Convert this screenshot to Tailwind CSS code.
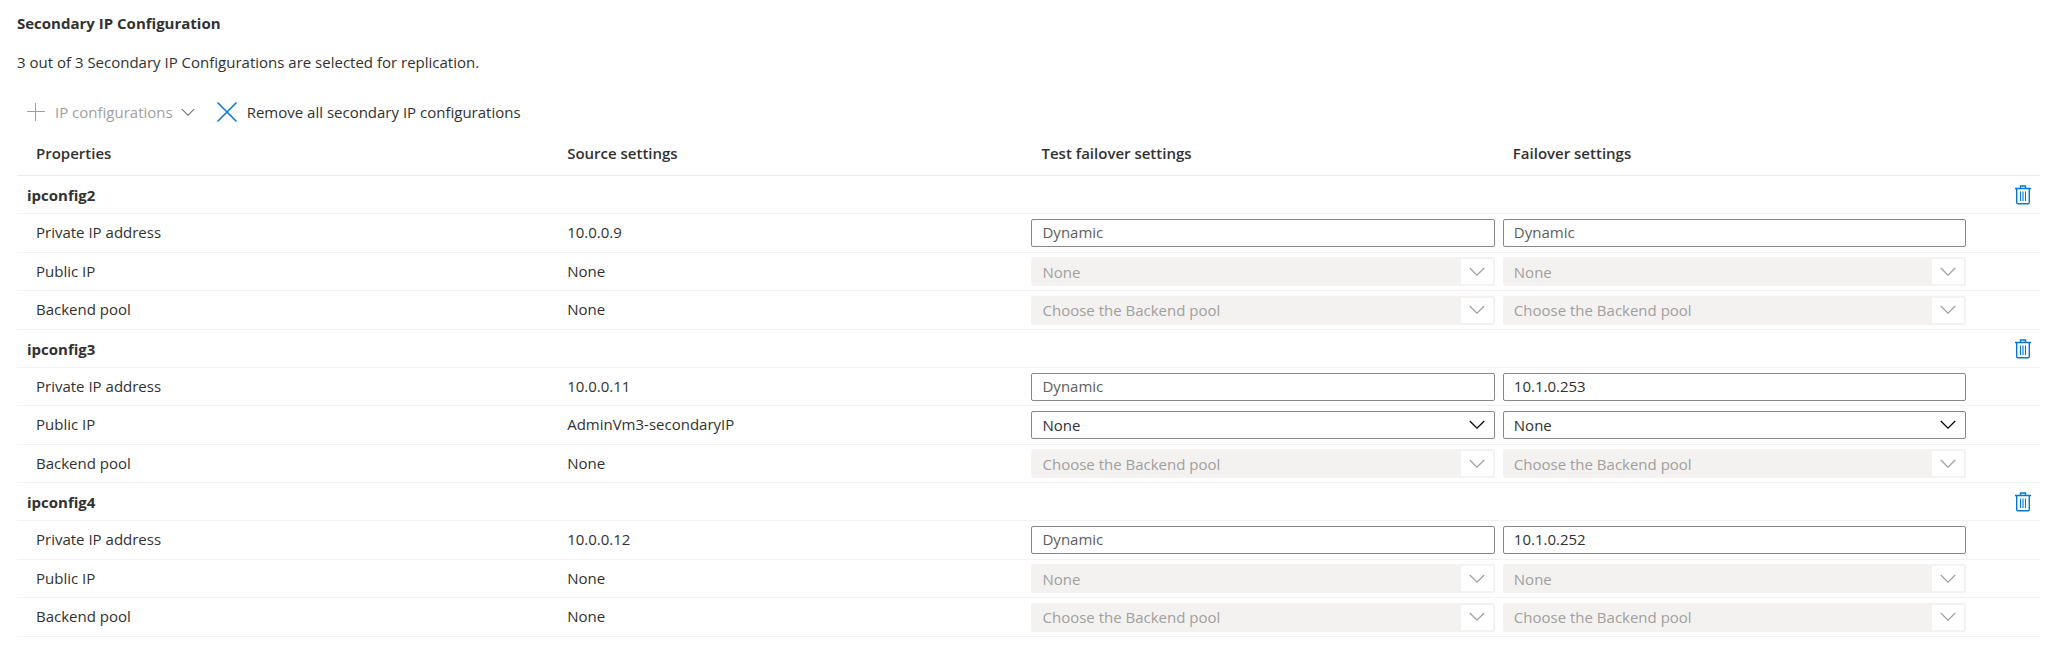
<!DOCTYPE html>
<html lang="en">
<head>
<meta charset="utf-8">
<meta name="viewport" content="width=device-width, initial-scale=1">
<title>Secondary IP Configuration</title>
<script src="https://cdn.jsdelivr.net/npm/@tailwindcss/browser@4"></script>
</head>
<body class="bg-white text-[#323130] text-[15px] leading-5 font-['Open_Sans','Noto_Sans',sans-serif]">
<svg class="hidden" aria-hidden="true">
  <symbol id="chevron" viewBox="0 0 16 10"><path d="M0.8 1 8 8.2 15.2 1" fill="none" stroke="currentColor" stroke-width="1.2"/></symbol>
  <symbol id="trash" viewBox="0 0 16 20"><path d="M0 3.5H16M5.5 3.5V1H10.5V3.5M1.7 3.5V17.5Q1.7 18.8 3 18.8H13Q14.3 18.8 14.3 17.5V3.5" fill="none" stroke="currentColor" stroke-width="1.4"/><path d="M5.5 6.5V16M8 6.5V16M10.5 6.5V16" fill="none" stroke="currentColor" stroke-width="1.1"/></symbol>
</svg>
<main class="pl-[17px] pr-[18px] pt-[13px]">
  <h1 class="font-bold">Secondary IP Configuration</h1>
  <p class="mt-[19px]">3 out of 3 Secondary IP Configurations are selected for replication.</p>

  <div class="mt-[22px] flex h-9 items-center gap-[22px] pl-[10px]">
    <button type="button" disabled class="flex items-center gap-2 text-[#a19f9d]">
      <svg class="mr-[2px] size-[18px]" viewBox="0 0 18 18" aria-hidden="true"><path d="M8.5 0V18M0 8.5H18" fill="none" stroke="currentColor"/></svg>
      IP configurations
      <svg class="h-[9px] w-[14px] text-[#605e5c]" aria-hidden="true"><use href="#chevron"/></svg>
    </button>
    <button type="button" class="flex items-center gap-[10px]">
      <svg class="size-5 text-[#0078d4]" viewBox="0 0 20 20" aria-hidden="true"><path d="M0.5 0.5 19.5 19.5M19.5 0.5 0.5 19.5" fill="none" stroke="currentColor" stroke-width="1.5"/></svg>
      Remove all secondary IP configurations
    </button>
  </div>

  <table class="w-full table-fixed border-separate border-spacing-0 text-left
    [&_tbody_td]:border-b [&_tbody_td]:border-[#f3f2f1] [&_tbody_th]:border-b [&_tbody_th]:border-[#f3f2f1] [&_thead_th]:border-b [&_thead_th]:border-[#edebe9] [&_thead_td]:border-b [&_thead_td]:border-[#edebe9]">
    <colgroup><col class="w-[26.7%]"><col class="w-[23.25%]"><col class="w-[23.3%]"><col class="w-[23.3%]"><col></colgroup>
    <thead>
      <tr class="h-[46px] [&>th]:font-semibold">
        <th scope="col" class="pl-[19px]">Properties</th>
        <th scope="col" class="pl-[10px]">Source settings</th>
        <th scope="col" class="pl-[14px]">Test failover settings</th>
        <th scope="col" class="pl-[14px]">Failover settings</th>
        <td></td>
      </tr>
    </thead>

    <tbody>
      <tr class="h-[38px]">
        <th scope="rowgroup" colspan="4" class="pl-[10px] font-bold">ipconfig2</th>
        <td><button type="button" aria-label="Delete ipconfig2" class="ml-auto mr-[9px] block text-[#0078d4]"><svg class="h-5 w-4"><use href="#trash"/></svg></button></td>
      </tr>
      <tr class="h-[39px]">
        <th scope="row" class="pb-[2px] pl-[19px] font-normal">Private IP address</th>
        <td class="pb-[2px] pl-[10px]">10.0.0.9</td>
        <td class="px-1"><input aria-label="ipconfig2 test failover private IP address" placeholder="Dynamic" class="block h-7 w-full rounded-xs border border-[#8a8886] px-[10px] pb-[2px] placeholder:text-[#605e5c]"></td>
        <td class="px-1"><input aria-label="ipconfig2 failover private IP address" placeholder="Dynamic" class="block h-7 w-full rounded-xs border border-[#8a8886] px-[10px] pb-[2px] placeholder:text-[#605e5c]"></td>
        <td></td>
      </tr>
      <tr class="h-[38px]">
        <th scope="row" class="pb-[2px] pl-[19px] font-normal">Public IP</th>
        <td class="pb-[2px] pl-[10px]">None</td>
        <td class="px-1"><div class="relative"><select disabled aria-label="ipconfig2 test failover public IP" class="block h-[29px] w-full appearance-none rounded-xs bg-[#f3f2f1] px-[11px] text-[#a19f9d] opacity-100"><option>None</option></select><span class="pointer-events-none absolute inset-y-[2px] right-[2px] flex w-8 items-center justify-center bg-white text-[#a19f9d]"><svg class="h-[10px] w-4"><use href="#chevron"/></svg></span></div></td>
        <td class="px-1"><div class="relative"><select disabled aria-label="ipconfig2 failover public IP" class="block h-[29px] w-full appearance-none rounded-xs bg-[#f3f2f1] px-[11px] text-[#a19f9d] opacity-100"><option>None</option></select><span class="pointer-events-none absolute inset-y-[2px] right-[2px] flex w-8 items-center justify-center bg-white text-[#a19f9d]"><svg class="h-[10px] w-4"><use href="#chevron"/></svg></span></div></td>
        <td></td>
      </tr>
      <tr class="h-[39px]">
        <th scope="row" class="pb-[2px] pl-[19px] font-normal">Backend pool</th>
        <td class="pb-[2px] pl-[10px]">None</td>
        <td class="px-1"><div class="relative"><select disabled aria-label="ipconfig2 test failover backend pool" class="block h-[29px] w-full appearance-none rounded-xs bg-[#f3f2f1] px-[11px] text-[#a19f9d] opacity-100"><option>Choose the Backend pool</option></select><span class="pointer-events-none absolute inset-y-[2px] right-[2px] flex w-8 items-center justify-center bg-white text-[#a19f9d]"><svg class="h-[10px] w-4"><use href="#chevron"/></svg></span></div></td>
        <td class="px-1"><div class="relative"><select disabled aria-label="ipconfig2 failover backend pool" class="block h-[29px] w-full appearance-none rounded-xs bg-[#f3f2f1] px-[11px] text-[#a19f9d] opacity-100"><option>Choose the Backend pool</option></select><span class="pointer-events-none absolute inset-y-[2px] right-[2px] flex w-8 items-center justify-center bg-white text-[#a19f9d]"><svg class="h-[10px] w-4"><use href="#chevron"/></svg></span></div></td>
        <td></td>
      </tr>
    </tbody>

    <tbody>
      <tr class="h-[38px]">
        <th scope="rowgroup" colspan="4" class="pl-[10px] font-bold">ipconfig3</th>
        <td><button type="button" aria-label="Delete ipconfig3" class="ml-auto mr-[9px] block text-[#0078d4]"><svg class="h-5 w-4"><use href="#trash"/></svg></button></td>
      </tr>
      <tr class="h-[38px]">
        <th scope="row" class="pb-[2px] pl-[19px] font-normal">Private IP address</th>
        <td class="pb-[2px] pl-[10px]">10.0.0.11</td>
        <td class="px-1"><input aria-label="ipconfig3 test failover private IP address" placeholder="Dynamic" class="block h-7 w-full rounded-xs border border-[#8a8886] px-[10px] pb-[2px] placeholder:text-[#605e5c]"></td>
        <td class="px-1"><input aria-label="ipconfig3 failover private IP address" value="10.1.0.253" class="block h-7 w-full rounded-xs border border-[#8a8886] px-[10px] pb-[2px]"></td>
        <td></td>
      </tr>
      <tr class="h-[39px]">
        <th scope="row" class="pb-[2px] pl-[19px] font-normal">Public IP</th>
        <td class="pb-[2px] pl-[10px]">AdminVm3-secondaryIP</td>
        <td class="px-1"><div class="relative"><select aria-label="ipconfig3 test failover public IP" class="block h-7 w-full appearance-none rounded-xs border border-[#8a8886] px-[10px]"><option>None</option></select><span class="pointer-events-none absolute inset-y-[2px] right-[2px] flex w-8 items-center justify-center text-black"><svg class="h-[10px] w-4"><use href="#chevron"/></svg></span></div></td>
        <td class="px-1"><div class="relative"><select aria-label="ipconfig3 failover public IP" class="block h-7 w-full appearance-none rounded-xs border border-[#8a8886] px-[10px]"><option>None</option></select><span class="pointer-events-none absolute inset-y-[2px] right-[2px] flex w-8 items-center justify-center text-black"><svg class="h-[10px] w-4"><use href="#chevron"/></svg></span></div></td>
        <td></td>
      </tr>
      <tr class="h-[38px]">
        <th scope="row" class="pb-[2px] pl-[19px] font-normal">Backend pool</th>
        <td class="pb-[2px] pl-[10px]">None</td>
        <td class="px-1"><div class="relative"><select disabled aria-label="ipconfig3 test failover backend pool" class="block h-[29px] w-full appearance-none rounded-xs bg-[#f3f2f1] px-[11px] text-[#a19f9d] opacity-100"><option>Choose the Backend pool</option></select><span class="pointer-events-none absolute inset-y-[2px] right-[2px] flex w-8 items-center justify-center bg-white text-[#a19f9d]"><svg class="h-[10px] w-4"><use href="#chevron"/></svg></span></div></td>
        <td class="px-1"><div class="relative"><select disabled aria-label="ipconfig3 failover backend pool" class="block h-[29px] w-full appearance-none rounded-xs bg-[#f3f2f1] px-[11px] text-[#a19f9d] opacity-100"><option>Choose the Backend pool</option></select><span class="pointer-events-none absolute inset-y-[2px] right-[2px] flex w-8 items-center justify-center bg-white text-[#a19f9d]"><svg class="h-[10px] w-4"><use href="#chevron"/></svg></span></div></td>
        <td></td>
      </tr>
    </tbody>

    <tbody>
      <tr class="h-[38px]">
        <th scope="rowgroup" colspan="4" class="pl-[10px] font-bold">ipconfig4</th>
        <td><button type="button" aria-label="Delete ipconfig4" class="ml-auto mr-[9px] block text-[#0078d4]"><svg class="h-5 w-4"><use href="#trash"/></svg></button></td>
      </tr>
      <tr class="h-[39px]">
        <th scope="row" class="pb-[2px] pl-[19px] font-normal">Private IP address</th>
        <td class="pb-[2px] pl-[10px]">10.0.0.12</td>
        <td class="px-1"><input aria-label="ipconfig4 test failover private IP address" placeholder="Dynamic" class="block h-7 w-full rounded-xs border border-[#8a8886] px-[10px] pb-[2px] placeholder:text-[#605e5c]"></td>
        <td class="px-1"><input aria-label="ipconfig4 failover private IP address" value="10.1.0.252" class="block h-7 w-full rounded-xs border border-[#8a8886] px-[10px] pb-[2px]"></td>
        <td></td>
      </tr>
      <tr class="h-[38px]">
        <th scope="row" class="pb-[2px] pl-[19px] font-normal">Public IP</th>
        <td class="pb-[2px] pl-[10px]">None</td>
        <td class="px-1"><div class="relative"><select disabled aria-label="ipconfig4 test failover public IP" class="block h-[29px] w-full appearance-none rounded-xs bg-[#f3f2f1] px-[11px] text-[#a19f9d] opacity-100"><option>None</option></select><span class="pointer-events-none absolute inset-y-[2px] right-[2px] flex w-8 items-center justify-center bg-white text-[#a19f9d]"><svg class="h-[10px] w-4"><use href="#chevron"/></svg></span></div></td>
        <td class="px-1"><div class="relative"><select disabled aria-label="ipconfig4 failover public IP" class="block h-[29px] w-full appearance-none rounded-xs bg-[#f3f2f1] px-[11px] text-[#a19f9d] opacity-100"><option>None</option></select><span class="pointer-events-none absolute inset-y-[2px] right-[2px] flex w-8 items-center justify-center bg-white text-[#a19f9d]"><svg class="h-[10px] w-4"><use href="#chevron"/></svg></span></div></td>
        <td></td>
      </tr>
      <tr class="h-[39px]">
        <th scope="row" class="pb-[2px] pl-[19px] font-normal">Backend pool</th>
        <td class="pb-[2px] pl-[10px]">None</td>
        <td class="px-1"><div class="relative"><select disabled aria-label="ipconfig4 test failover backend pool" class="block h-[29px] w-full appearance-none rounded-xs bg-[#f3f2f1] px-[11px] text-[#a19f9d] opacity-100"><option>Choose the Backend pool</option></select><span class="pointer-events-none absolute inset-y-[2px] right-[2px] flex w-8 items-center justify-center bg-white text-[#a19f9d]"><svg class="h-[10px] w-4"><use href="#chevron"/></svg></span></div></td>
        <td class="px-1"><div class="relative"><select disabled aria-label="ipconfig4 failover backend pool" class="block h-[29px] w-full appearance-none rounded-xs bg-[#f3f2f1] px-[11px] text-[#a19f9d] opacity-100"><option>Choose the Backend pool</option></select><span class="pointer-events-none absolute inset-y-[2px] right-[2px] flex w-8 items-center justify-center bg-white text-[#a19f9d]"><svg class="h-[10px] w-4"><use href="#chevron"/></svg></span></div></td>
        <td></td>
      </tr>
    </tbody>
  </table>
</main>
</body>
</html>
